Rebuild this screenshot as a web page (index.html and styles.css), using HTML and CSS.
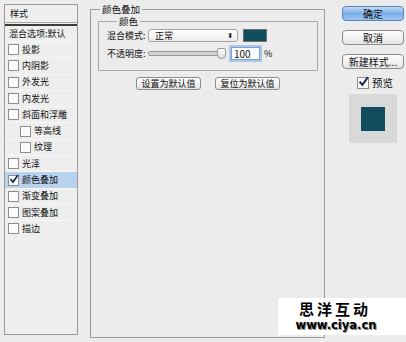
FILE: index.html
```html
<!DOCTYPE html>
<html lang="zh-CN">

<head>
    <meta charset="UTF-8">
    <title>图层样式 - 颜色叠加</title>
    <link rel="stylesheet" href="styles.css">
</head>

<body>
    <div class="dialog">
        <div class="styles">
            <div class="styles-head">样式</div>
            <div class="styles-blend">混合选项:默认</div>
            <ul class="fx-list">
                <li><span class="box"></span>投影</li>
                <li><span class="box"></span>内阴影</li>
                <li><span class="box"></span>外发光</li>
                <li><span class="box"></span>内发光</li>
                <li><span class="box"></span>斜面和浮雕</li>
                <li class="sub"><span class="box"></span>等高线</li>
                <li class="sub"><span class="box"></span>纹理</li>
                <li><span class="box"></span>光泽</li>
                <li class="active"><span class="box">
                        <svg viewBox="0 0 10 10" width="10" height="10"><path d="M1.5 5.2 L4 8 L9 1" fill="none" stroke="#1d2c5a" stroke-width="1.8"/></svg>
                    </span>颜色叠加</li>
                <li><span class="box"></span>渐变叠加</li>
                <li><span class="box"></span>图案叠加</li>
                <li><span class="box"></span>描边</li>
            </ul>
        </div>

        <fieldset class="panel">
            <legend>颜色叠加</legend>
            <fieldset class="group">
                <legend>颜色</legend>
                <div class="row">
                    <span class="label">混合模式:</span>
                    <div class="select">正常<span class="arrows">⬍</span></div>
                    <div class="swatch"></div>
                </div>
                <div class="row">
                    <span class="label">不透明度:</span>
                    <div class="slider"><span class="thumb"></span></div>
                    <div class="num">100</div>
                    <span class="pct">%</span>
                </div>
            </fieldset>
            <div class="defaults">
                <button class="btn">设置为默认值</button>
                <button class="btn">复位为默认值</button>
            </div>
        </fieldset>

        <div class="side">
            <button class="btn big primary">确定</button>
            <button class="btn big">取消</button>
            <button class="btn big">新建样式...</button>
            <div class="preview-check">
                <span class="box">
                    <svg viewBox="0 0 10 10" width="11" height="11"><path d="M1.5 5.2 L4 8 L9 1" fill="none" stroke="#1d2c5a" stroke-width="1.8"/></svg>
                </span>预览
            </div>
            <div class="preview">
                <div class="preview-swatch"></div>
            </div>
        </div>
    </div>

    <div class="watermark">
        <div class="wm-title">思洋互动</div>
        <div class="wm-url">www.ciya.cn</div>
    </div>
</body>

</html>
```

FILE: styles.css
```css
body {
    margin: 0;
    width: 406px;
    height: 342px;
    overflow: hidden;
    background: #ececec;
    font-family: "Noto Sans CJK SC", "DejaVu Sans", sans-serif;
    font-size: 9px;
    color: #111;
    position: relative;
}

.dialog {
    display: flex;
    align-items: flex-start;
    padding: 4px 0 0 4px;
}

/* left list of effects */
.styles {
    width: 72px;
    height: 329px;
    border: 1px solid #9a9a9a;
    background: #eeeeee;
}

.styles-head {
    height: 17px;
    line-height: 17px;
    padding-left: 5px;
    border-bottom: 1px solid #a8a8a8;
    margin-bottom: 1px;
}

.styles-blend {
    height: 15px;
    line-height: 15px;
    padding-left: 4px;
    border-top: 2px solid #3c3c3c;
}

.fx-list {
    list-style: none;
    margin: 0;
    padding: 0;
}

.fx-list li {
    height: 16.3px;
    line-height: 16px;
    display: flex;
    align-items: center;
    padding-left: 3px;
    border-top: 1px solid #f7f7f7;
    box-sizing: border-box;
}

.fx-list li.sub {
    padding-left: 15px;
}

.fx-list li.active {
    background: #b9d3ef;
}

.box {
    width: 9px;
    height: 9px;
    border: 1px solid #8e8e8e;
    background: #fbfbfb;
    margin-right: 3px;
    position: relative;
    flex-shrink: 0;
}

.box svg {
    position: absolute;
    left: 0;
    top: -2px;
}

/* center panel */
fieldset {
    margin: 0;
    padding: 0;
    border: 1px solid #9c9c9c;
    min-width: 0;
}

legend {
    padding: 0 2px;
    font-size: 9.5px;
    line-height: 10px;
}

.panel {
    margin-left: 12px;
    margin-top: 0;
    width: 235px;
    height: 334px;
    box-sizing: border-box;
    padding: 0 6px 0 7px;
}

.panel > legend {
    margin-left: 2px;
}

.group {
    margin-top: 2px;
    height: 55px;
    box-sizing: border-box;
    padding: 0 0 0 8px;
    border-color: #a9a9a9;
}

.group > legend {
    margin-left: 10px;
}

.row {
    display: flex;
    align-items: center;
    height: 18px;
    white-space: nowrap;
}

.label {
    width: 41px;
}

.select {
    width: 82px;
    height: 11px;
    line-height: 11px;
    border: 1px solid #a3a3a3;
    border-radius: 3px;
    background: linear-gradient(#ffffff, #ececec);
    padding-left: 6px;
    position: relative;
}

.arrows {
    position: absolute;
    right: 4px;
    top: 0;
    font-size: 7px;
}

.swatch {
    width: 22px;
    height: 11px;
    margin-left: 5px;
    border: 1px solid #6f6f6f;
    background: #124d5f;
}

.slider {
    width: 74px;
    height: 3px;
    border: 1px solid #999;
    border-radius: 2px;
    background: #d4d4d4;
    position: relative;
}

.thumb {
    position: absolute;
    right: -3px;
    top: -4px;
    width: 7px;
    height: 9px;
    background: linear-gradient(#fff, #ddd);
    border: 1px solid #999;
    border-radius: 2px 2px 4px 4px;
}

.num {
    margin-left: 7px;
    width: 25px;
    height: 11px;
    line-height: 11px;
    padding-left: 2px;
    font-size: 10px;
    border: 1px solid #7f9fc7;
    background: #fff;
    box-shadow: 0 0 0 2px #a9c8ee;
}

.pct {
    margin-left: 4px;
}

.defaults {
    display: flex;
    justify-content: center;
    gap: 14px;
    margin-top: 6px;
}

.btn {
    font-family: "Noto Sans CJK SC", "DejaVu Sans", sans-serif;
    font-size: 9px;
    width: 65px;
    height: 13px;
    line-height: 11px;
    padding: 0;
    border: 1px solid #8c8c8c;
    border-radius: 3px;
    background: linear-gradient(#ffffff, #e4e4e4);
    color: #111;
}

/* right column */
.side {
    margin-left: 17px;
    margin-top: 2px;
    width: 62px;
    display: flex;
    flex-direction: column;
    align-items: center;
}

.btn.big {
    font-size: 10px;
    width: 62px;
    height: 15px;
    line-height: 13px;
    border-radius: 4px;
    margin-bottom: 9px;
}

.btn.primary {
    background: linear-gradient(#c6dcf7, #7aaee8 50%, #9cc5f2);
    border-color: #5b83b4;
}

.preview-check {
    display: flex;
    align-items: center;
    font-size: 10.5px;
    margin-top: -3px;
    margin-left: 4px;
}

.preview-check .box {
    width: 10px;
    height: 10px;
}

.preview {
    margin-top: 4px;
    width: 48px;
    height: 49px;
    background: #d9d9d9;
    display: flex;
    align-items: center;
    justify-content: center;
}

.preview-swatch {
    width: 24px;
    height: 24px;
    background: #124d5f;
}

/* watermark over the corner */
.watermark {
    position: absolute;
    left: 278px;
    top: 298px;
    width: 128px;
    height: 37px;
    background: #fff;
    text-align: center;
    font-family: "Noto Sans CJK SC", sans-serif;
    font-weight: bold;
    color: #000;
}

.wm-title {
    font-size: 15px;
    line-height: 16px;
    letter-spacing: 3px;
    margin-top: 3px;
    margin-right: 14px;
}

.wm-url {
    font-family: "DejaVu Sans", sans-serif;
    font-size: 11.5px;
    line-height: 13px;
    margin-top: 2px;
    margin-right: 12px;
    text-shadow: 1px 1px 0 #888;
}
```
